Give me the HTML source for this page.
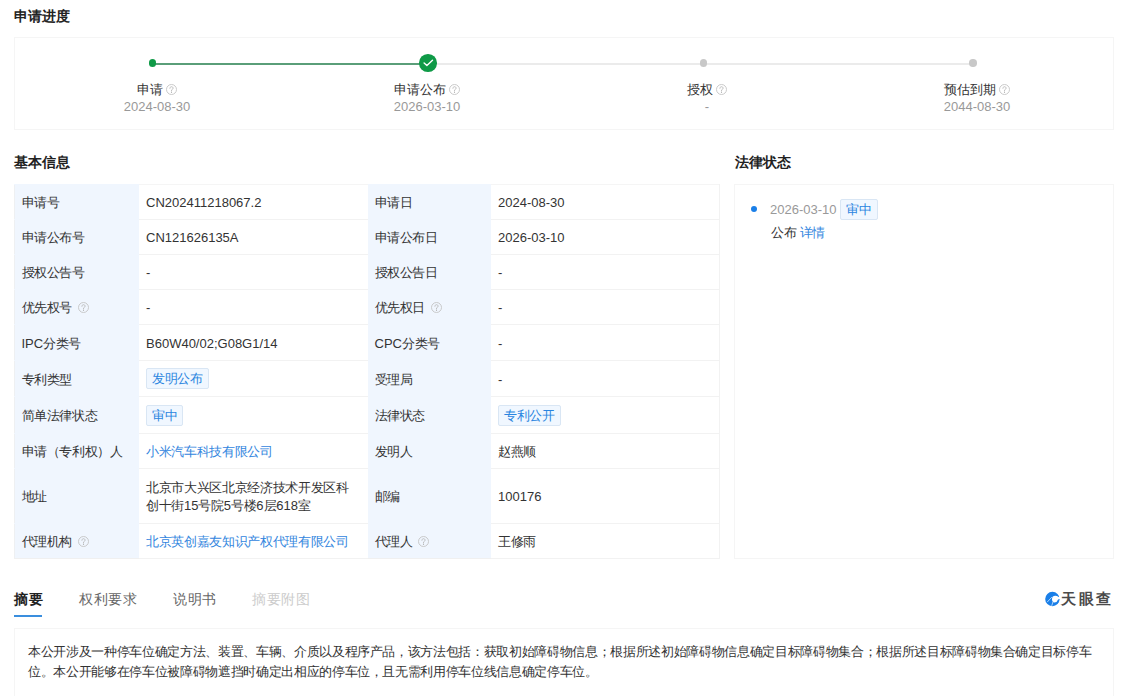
<!DOCTYPE html>
<html><head><meta charset="utf-8">
<style>
*{box-sizing:border-box;margin:0;padding:0}
html,body{width:1125px;height:696px;overflow:hidden;background:#fff}
body{font-family:"Liberation Sans",sans-serif;color:#333;position:relative}
.abs{position:absolute;white-space:nowrap}
.h{font-size:14px;font-weight:bold;color:#222;line-height:20px}
.card{position:absolute;border:1px solid #f5f5f5;background:#fff}
.q{display:inline-block;position:relative;top:-1px;margin-left:0;vertical-align:middle}
.step{position:absolute;text-align:center;font-size:13px;line-height:17px}
.step .t{color:#333}
.step .d{color:#999}
table{position:absolute;border-collapse:collapse;table-layout:fixed;font-size:13px;letter-spacing:-0.34px}
.n{letter-spacing:0}
td{border-bottom:1px solid #f2f2f2;padding:2px 0 0 7px;color:#333;vertical-align:middle;line-height:18px}
td.l{background:#f0f6fe;border-bottom-color:#f0f6fe}
tr td:last-child{border-right:1px solid #f2f2f2}
tr:first-child td{border-top:1px solid #f5f5f5}
tr:first-child td.l{border-top-color:#f0f6fe}
tr td:first-child{border-left:1px solid #eef0f2}
tr:last-child td.l{border-bottom-color:#f0f0f0}
.tag{display:inline-block;border:1px solid #d9e6f4;background:#f0f7ff;color:#2a85e0;padding:0 5px;height:21px;line-height:19px;border-radius:2px}
.lnk{color:#3386de}
td .tag{position:relative;top:-1px}
td .q{margin-left:2.5px}
</style></head><body>

<div class="abs h" style="left:14px;top:6px">申请进度</div>
<div class="card" style="left:14px;top:37px;width:1100px;height:93px"></div>
<!-- progress lines -->
<div class="abs" style="left:152px;top:63px;width:276px;height:2px;background:#5a9e79"></div>
<div class="abs" style="left:428px;top:63px;width:545px;height:2px;background:#ebebeb"></div>
<div class="abs" style="left:148.5px;top:59px;width:7.5px;height:7.5px;border-radius:50%;background:#0f9a47"></div>
<div class="abs" style="left:419px;top:54.2px;width:17.6px;height:17.6px;border-radius:50%;background:#0f9a47">
<svg width="18" height="18" viewBox="0 0 18 18" style="position:absolute;left:0;top:0"><path d="M5.1 9 L7.9 11.5 L13.5 6.2" fill="none" stroke="#fff" stroke-width="1.4" stroke-linecap="round" stroke-linejoin="round"/></svg>
</div>
<div class="abs" style="left:699.5px;top:59.2px;width:7.5px;height:7.5px;border-radius:50%;background:#c8c8c8"></div>
<div class="abs" style="left:969px;top:59.2px;width:7.5px;height:7.5px;border-radius:50%;background:#c8c8c8"></div>

<div class="step" style="left:107px;top:81px;width:100px"><div class="t">申请 <svg class="q" width="11" height="11" viewBox="0 0 11 11"><circle cx="5.5" cy="5.5" r="5" fill="none" stroke="#c4c4c4" stroke-width="0.9"/><path d="M3.9 4.3 C3.9 3.3 4.6 2.7 5.5 2.7 C6.4 2.7 7.1 3.3 7.1 4.1 C7.1 5 6.1 5.2 5.6 6 L5.5 7.1" fill="none" stroke="#b8b8b8" stroke-width="0.9" stroke-linecap="round"/><circle cx="5.5" cy="8.4" r="0.55" fill="#b8b8b8"/></svg></div><div class="d">2024-08-30</div></div>
<div class="step" style="left:377px;top:81px;width:100px"><div class="t">申请公布 <svg class="q" width="11" height="11" viewBox="0 0 11 11"><circle cx="5.5" cy="5.5" r="5" fill="none" stroke="#c4c4c4" stroke-width="0.9"/><path d="M3.9 4.3 C3.9 3.3 4.6 2.7 5.5 2.7 C6.4 2.7 7.1 3.3 7.1 4.1 C7.1 5 6.1 5.2 5.6 6 L5.5 7.1" fill="none" stroke="#b8b8b8" stroke-width="0.9" stroke-linecap="round"/><circle cx="5.5" cy="8.4" r="0.55" fill="#b8b8b8"/></svg></div><div class="d">2026-03-10</div></div>
<div class="step" style="left:657px;top:81px;width:100px"><div class="t">授权 <svg class="q" width="11" height="11" viewBox="0 0 11 11"><circle cx="5.5" cy="5.5" r="5" fill="none" stroke="#c4c4c4" stroke-width="0.9"/><path d="M3.9 4.3 C3.9 3.3 4.6 2.7 5.5 2.7 C6.4 2.7 7.1 3.3 7.1 4.1 C7.1 5 6.1 5.2 5.6 6 L5.5 7.1" fill="none" stroke="#b8b8b8" stroke-width="0.9" stroke-linecap="round"/><circle cx="5.5" cy="8.4" r="0.55" fill="#b8b8b8"/></svg></div><div class="d">-</div></div>
<div class="step" style="left:927px;top:81px;width:100px"><div class="t">预估到期 <svg class="q" width="11" height="11" viewBox="0 0 11 11"><circle cx="5.5" cy="5.5" r="5" fill="none" stroke="#c4c4c4" stroke-width="0.9"/><path d="M3.9 4.3 C3.9 3.3 4.6 2.7 5.5 2.7 C6.4 2.7 7.1 3.3 7.1 4.1 C7.1 5 6.1 5.2 5.6 6 L5.5 7.1" fill="none" stroke="#b8b8b8" stroke-width="0.9" stroke-linecap="round"/><circle cx="5.5" cy="8.4" r="0.55" fill="#b8b8b8"/></svg></div><div class="d">2044-08-30</div></div>

<div class="abs h" style="left:14px;top:152px">基本信息</div>
<div class="abs h" style="left:735px;top:152px">法律状态</div>

<table style="left:13.5px;top:184px;width:705.5px">
<colgroup><col style="width:125px"><col style="width:228.5px"><col style="width:123.5px"><col style="width:228.5px"></colgroup>
<tr style="height:35px"><td class="l">申请号</td><td class="n">CN202411218067.2</td><td class="l">申请日</td><td class="n">2024-08-30</td></tr>
<tr style="height:35px"><td class="l">申请公布号</td><td class="n">CN121626135A</td><td class="l">申请公布日</td><td class="n">2026-03-10</td></tr>
<tr style="height:35px"><td class="l">授权公告号</td><td class="n">-</td><td class="l">授权公告日</td><td class="n">-</td></tr>
<tr style="height:35px"><td class="l">优先权号 <svg class="q" width="11" height="11" viewBox="0 0 11 11"><circle cx="5.5" cy="5.5" r="5" fill="none" stroke="#c4c4c4" stroke-width="0.9"/><path d="M3.9 4.3 C3.9 3.3 4.6 2.7 5.5 2.7 C6.4 2.7 7.1 3.3 7.1 4.1 C7.1 5 6.1 5.2 5.6 6 L5.5 7.1" fill="none" stroke="#b8b8b8" stroke-width="0.9" stroke-linecap="round"/><circle cx="5.5" cy="8.4" r="0.55" fill="#b8b8b8"/></svg></td><td class="n">-</td><td class="l">优先权日 <svg class="q" width="11" height="11" viewBox="0 0 11 11"><circle cx="5.5" cy="5.5" r="5" fill="none" stroke="#c4c4c4" stroke-width="0.9"/><path d="M3.9 4.3 C3.9 3.3 4.6 2.7 5.5 2.7 C6.4 2.7 7.1 3.3 7.1 4.1 C7.1 5 6.1 5.2 5.6 6 L5.5 7.1" fill="none" stroke="#b8b8b8" stroke-width="0.9" stroke-linecap="round"/><circle cx="5.5" cy="8.4" r="0.55" fill="#b8b8b8"/></svg></td><td class="n">-</td></tr>
<tr style="height:36px"><td class="l"><span class="n">IPC</span>分类号</td><td class="n">B60W40/02;G08G1/14</td><td class="l"><span class="n">CPC</span>分类号</td><td class="n">-</td></tr>
<tr style="height:36px"><td class="l">专利类型</td><td><span class="tag">发明公布</span></td><td class="l">受理局</td><td class="n">-</td></tr>
<tr style="height:37px"><td class="l">简单法律状态</td><td><span class="tag">审中</span></td><td class="l">法律状态</td><td><span class="tag">专利公开</span></td></tr>
<tr style="height:35px"><td class="l">申请（专利权）人</td><td class="lnk">小米汽车科技有限公司</td><td class="l">发明人</td><td>赵燕顺</td></tr>
<tr style="height:55px"><td class="l">地址</td><td style="white-space:normal;line-height:18px">北京市大兴区北京经济技术开发区科<br>创十街<span class="n">15</span>号院<span class="n">5</span>号楼<span class="n">6</span>层<span class="n">618</span>室</td><td class="l">邮编</td><td class="n">100176</td></tr>
<tr style="height:35px"><td class="l">代理机构 <svg class="q" width="11" height="11" viewBox="0 0 11 11"><circle cx="5.5" cy="5.5" r="5" fill="none" stroke="#c4c4c4" stroke-width="0.9"/><path d="M3.9 4.3 C3.9 3.3 4.6 2.7 5.5 2.7 C6.4 2.7 7.1 3.3 7.1 4.1 C7.1 5 6.1 5.2 5.6 6 L5.5 7.1" fill="none" stroke="#b8b8b8" stroke-width="0.9" stroke-linecap="round"/><circle cx="5.5" cy="8.4" r="0.55" fill="#b8b8b8"/></svg></td><td class="lnk">北京英创嘉友知识产权代理有限公司</td><td class="l">代理人 <svg class="q" width="11" height="11" viewBox="0 0 11 11"><circle cx="5.5" cy="5.5" r="5" fill="none" stroke="#c4c4c4" stroke-width="0.9"/><path d="M3.9 4.3 C3.9 3.3 4.6 2.7 5.5 2.7 C6.4 2.7 7.1 3.3 7.1 4.1 C7.1 5 6.1 5.2 5.6 6 L5.5 7.1" fill="none" stroke="#b8b8b8" stroke-width="0.9" stroke-linecap="round"/><circle cx="5.5" cy="8.4" r="0.55" fill="#b8b8b8"/></svg></td><td>王修雨</td></tr>
</table>

<div class="card" style="left:734px;top:184px;width:380px;height:375px"></div>
<div class="abs" style="left:751px;top:206px;width:6px;height:6px;border-radius:50%;background:#1a7fe8"></div>
<div class="abs" style="left:770px;top:199px;font-size:13px;line-height:20px;color:#999">2026-03-10 <span class="tag" style="margin-left:0">审中</span></div>
<div class="abs" style="left:771px;top:224px;font-size:13px;letter-spacing:-0.34px;line-height:18px;color:#333">公布 <span class="lnk">详情</span></div>

<!-- tabs -->
<div class="abs" style="left:14px;top:589px;font-size:14px;letter-spacing:0.5px;line-height:20px;font-weight:bold;color:#222">摘要</div>
<div class="abs" style="left:13.5px;top:614.5px;width:28.5px;height:2.6px;background:#3a8ede"></div>
<div class="abs" style="left:79px;top:589px;font-size:14px;letter-spacing:0.5px;line-height:20px;color:#666">权利要求</div>
<div class="abs" style="left:173px;top:589px;font-size:14px;letter-spacing:0.5px;line-height:20px;color:#666">说明书</div>
<div class="abs" style="left:252px;top:589px;font-size:14px;letter-spacing:0.5px;line-height:20px;color:#ccc">摘要附图</div>
<svg class="abs" style="left:1043px;top:589px" width="20" height="20" viewBox="0 0 20 20"><circle cx="9.4" cy="10" r="7.2" fill="#1a7fe8"/><circle cx="12.4" cy="10.2" r="3.4" fill="#fff"/><path d="M12.8 8.4 L17.2 7.4 L17.2 10.3 L13 10.3 Z" fill="#fff"/><path d="M10.2 16.6 Q15.3 15.4 16.5 10.3 L15.1 10.5 Q14 13.7 10.8 14.3 Z" fill="#1a7fe8"/><path d="M4.2 13.1 L8.9 8.1" stroke="#bfe0ff" stroke-width="0.9"/><path d="M8.7 16.9 L10 12.6" stroke="#bfe0ff" stroke-width="0.9"/></svg>
<div class="abs" style="left:1061px;top:589px;font-size:15px;letter-spacing:2.7px;line-height:20px;font-weight:bold;color:#4a4a4a">天眼查</div>

<div class="card" style="left:14px;top:628px;width:1100px;height:80px;background:#fff"></div>
<div class="abs" style="left:28px;top:642px;font-size:13px;letter-spacing:-0.34px;line-height:20px;color:#333">本公开涉及一种停车位确定方法、装置、车辆、介质以及程序产品，该方法包括：获取初始障碍物信息；根据所述初始障碍物信息确定目标障碍物集合；根据所述目标障碍物集合确定目标停车<br>位。本公开能够在停车位被障碍物遮挡时确定出相应的停车位，且无需利用停车位线信息确定停车位。</div>
</body></html>
